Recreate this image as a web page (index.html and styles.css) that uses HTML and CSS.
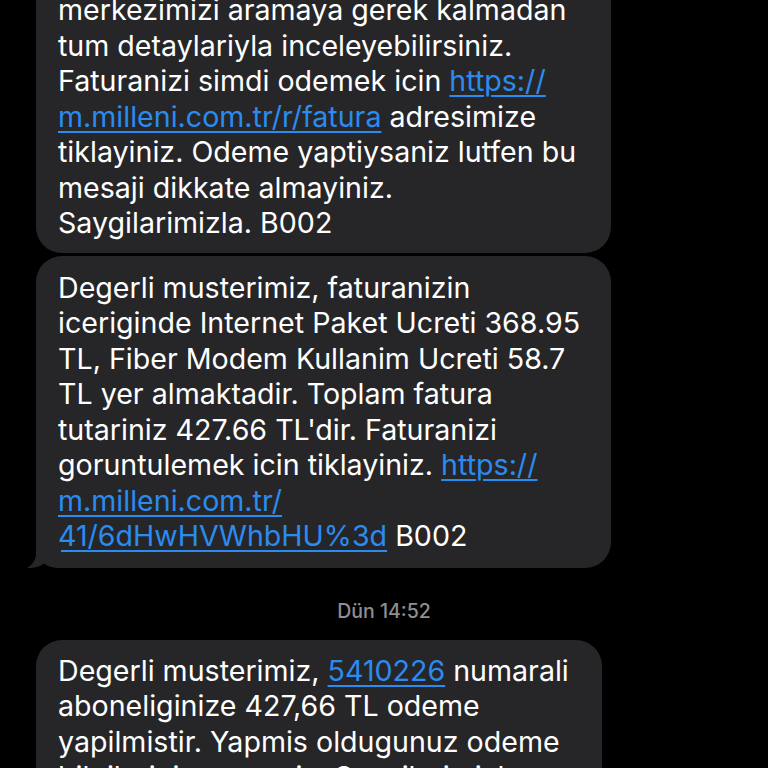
FILE: index.html
```html
<!DOCTYPE html>
<html lang="tr">
<head>
<meta charset="utf-8">
<title>Mesajlar</title>
<link rel="stylesheet" href="styles.css">
</head>
<body>
<main class="thread">
  <div class="bubble bubble-cut">
    merkezimizi aramaya gerek kalmadan<br>
    tum detaylariyla inceleyebilirsiniz.<br>
    Faturanizi simdi odemek icin <a class="link" href="#">https://<br>m.milleni.com.tr/r/fatura</a> adresimize<br>
    tiklayiniz. Odeme yaptiysaniz lutfen bu<br>
    mesaji dikkate almayiniz.<br>
    Saygilarimizla. B002
  </div>
  <div class="bubble bubble-tail">
    Degerli musterimiz, faturanizin<br>
    iceriginde Internet Paket Ucreti 368.95<br>
    TL, Fiber Modem Kullanim Ucreti 58.7<br>
    TL yer almaktadir. Toplam fatura<br>
    tutariniz 427.66 TL'dir. Faturanizi<br>
    goruntulemek icin tiklayiniz. <a class="link" href="#">https://<br>m.milleni.com.tr/<br>41/6dHwHVWhbHU%3d</a> B002
    <svg class="tail" width="34" height="24" viewBox="0 0 34 24" aria-hidden="true">
      <path d="M9 0 L9 9 C9 16 5 21 0 24 C7 24.5 13 22.5 17 19.5 C21 22.5 26 24 34 24 L34 0 Z" fill="#262628"/>
    </svg>
  </div>
  <div class="stamp">Dün 14:52</div>
  <div class="bubble bubble-last">
    Degerli musterimiz, <a class="link" href="#">5410226</a> numarali<br>
    aboneliginize 427,66 TL odeme<br>
    yapilmistir. Yapmis oldugunuz odeme<br>
    bilgilerinize sunariz. Saygilarimizla
  </div>
</main>
</body>
</html>
```
FILE: styles.css
```css
html, body {
  margin: 0;
  padding: 0;
  background: #000;
}
body {
  width: 768px;
  height: 768px;
  overflow: hidden;
  font-family: Inter, "Noto Sans", "Liberation Sans", sans-serif;
}
.thread {
  display: flex;
  flex-direction: column;
  align-items: flex-start;
  padding-left: 36px;
  margin-top: -8px;
}
.bubble {
  position: relative;
  box-sizing: border-box;
  background: #262628;
  color: #fff;
  font-size: 28.6px;
  line-height: 35.5px;
  border-radius: 26px;
  padding: 13px 22px;
  white-space: nowrap;
}
.bubble-cut {
  width: 575px;
  border-top-left-radius: 0;
  border-top-right-radius: 0;
  padding-top: 0;
  padding-bottom: 12px;
}
.bubble-tail {
  width: 575px;
  margin-top: 3px;
  padding-top: 14px;
  padding-bottom: 14px;
}
.bubble-last {
  width: 566px;
  padding-top: 13px;
}
.link {
  color: #2a8bf0;
  text-decoration: underline;
  text-decoration-thickness: 2px;
  text-underline-offset: 4px;
}
.tail {
  position: absolute;
  left: -9px;
  bottom: 0;
  display: block;
}
.stamp {
  align-self: stretch;
  margin-left: -36px;
  margin-top: 31px;
  margin-bottom: 17px;
  text-align: center;
  color: #8e8e93;
  font-size: 19.5px;
  line-height: 24px;
  font-weight: 500;
}
```
